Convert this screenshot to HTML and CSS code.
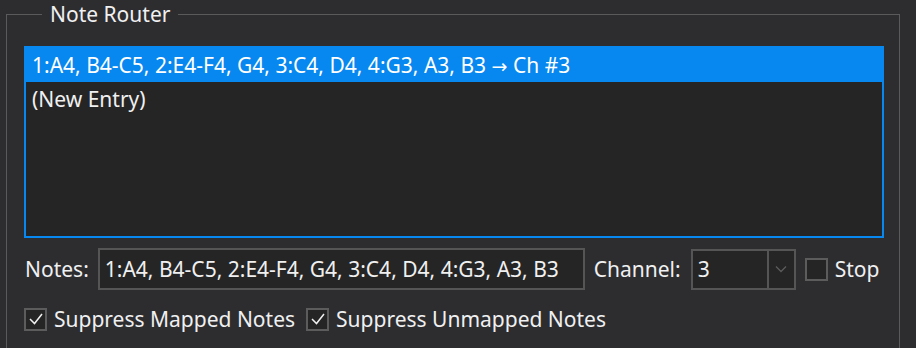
FILE: index.html
```html
<!doctype html>
<html lang="en">
<head>
  <meta charset="UTF-8">
  <title>Note Router</title>
  <link rel="stylesheet" href="styles.css">
</head>
<body>
  <fieldset class="group">
    <legend>Note Router</legend>

    <ul class="list">
      <li class="row selected">1:A4, B4-C5, 2:E4-F4, G4, 3:C4, D4, 4:G3, A3, B3 <span class="arrow">&rarr;</span> Ch #3</li>
      <li class="row">(New Entry)</li>
    </ul>

    <div class="fields">
      <span class="label">Notes:</span>
      <div class="input">1:A4, B4-C5, 2:E4-F4, G4, 3:C4, D4, 4:G3, A3, B3</div>
      <span class="label channel">Channel:</span>
      <div class="combo">
        <span class="combo-value">3</span>
        <span class="combo-btn">
          <svg width="12" height="8" viewBox="0 0 12 8"><path d="M1 1.5 L6 6.5 L11 1.5" fill="none" stroke="#5c5c5c" stroke-width="1.3"/></svg>
        </span>
      </div>
      <label class="check stop"><span class="box"></span>Stop</label>
    </div>

    <div class="checks">
      <label class="check">
        <span class="box"><svg width="18" height="18" viewBox="0 0 18 18"><path d="M3 9 L7.5 13.5 L15 4" fill="none" stroke="#f0f0f0" stroke-width="1.5"/></svg></span>
        Suppress Mapped Notes
      </label>
      <label class="check">
        <span class="box"><svg width="18" height="18" viewBox="0 0 18 18"><path d="M3 9 L7.5 13.5 L15 4" fill="none" stroke="#f0f0f0" stroke-width="1.5"/></svg></span>
        Suppress Unmapped Notes
      </label>
    </div>
  </fieldset>
</body>
</html>
```

FILE: styles.css
```css
html, body{
  margin: 0;
  background: #2d2d30;
  color: #f0f0f0;
  font-family: "Noto Sans", "Open Sans", sans-serif;
  font-size: 21px;
}

body{
  height: 348px;
  overflow: hidden;
}

.group{
  margin: 0 16px 0 6px;
  padding: 18px 15px 0 17px;
  border: 1px solid #5a5a5a;
  border-bottom: none;
  height: 348px;
  box-sizing: border-box;
}

.group legend{
  margin-left: 18px;
  padding: 0 8px;
  line-height: 28px;
}

.list{
  list-style: none;
  margin: 0;
  padding: 0;
  height: 192px;
  box-sizing: border-box;
  border: 2px solid #0787f0;
  background: #252525;
}

.row{
  height: 34px;
  line-height: 34px;
  padding-left: 6px;
  white-space: nowrap;
}

.row.selected{
  background: #0787f0;
  color: #fff;
}

.arrow{
  font-family: "DejaVu Sans", sans-serif;
  font-size: 19px;
}

.fields{
  display: flex;
  align-items: center;
  margin-top: 10px;
  height: 42px;
}

.label{
  margin-left: 1px;
}

.input{
  width: 487px;
  height: 42px;
  box-sizing: border-box;
  margin-left: 9px;
  padding-left: 5px;
  border: 2px solid #555;
  background: #252525;
  line-height: 38px;
  white-space: nowrap;
}

.label.channel{
  margin-left: 9px;
}

.combo{
  display: flex;
  width: 105px;
  height: 41px;
  box-sizing: border-box;
  margin-left: 10px;
  border: 2px solid #555;
  background: #252525;
}

.combo-value{
  flex: 1;
  padding-left: 5px;
  line-height: 37px;
}

.combo-btn{
  width: 25px;
  border-left: 2px solid #555;
  display: flex;
  align-items: center;
  justify-content: center;
}

.check{
  display: flex;
  align-items: center;
}

.box{
  width: 23px;
  height: 23px;
  box-sizing: border-box;
  border: 2px solid #5c5c5c;
  background: #252525;
  margin-right: 7px;
  display: flex;
  align-items: center;
  justify-content: center;
}

.stop{
  margin-left: 9px;
}

.checks{
  display: flex;
  gap: 11px;
  margin-top: 15px;
}
```
